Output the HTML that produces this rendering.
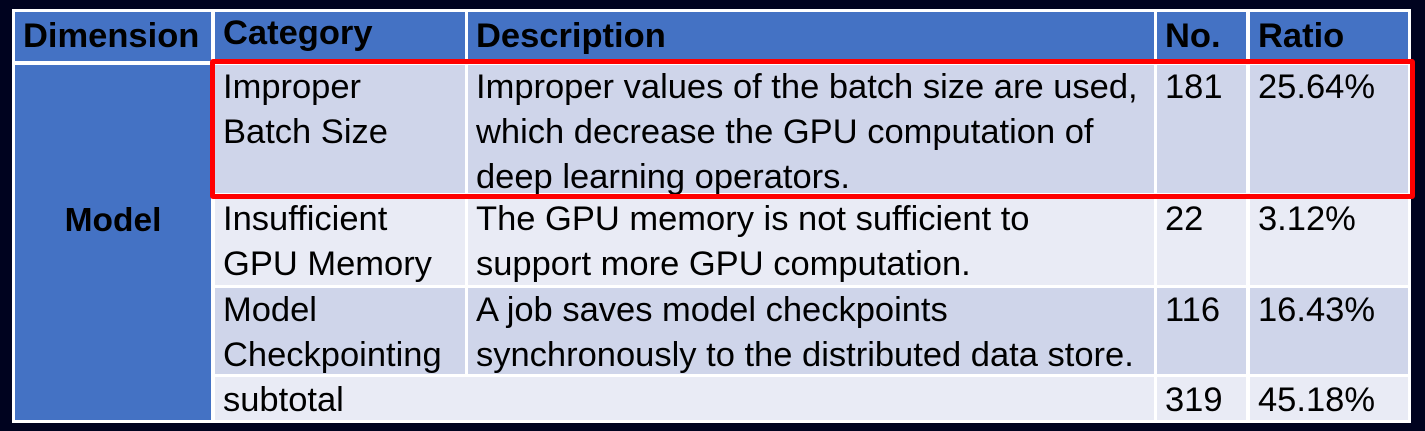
<!DOCTYPE html>
<html><head><style>
body{margin:0;width:1425px;height:431px;background:#00031f;position:relative;overflow:hidden;font-family:"Liberation Sans",Arial,sans-serif;color:#000}
.w{position:absolute;left:12px;top:9px;width:1399px;height:414px;background:#fff}
.c{position:absolute;box-sizing:border-box;padding:0 0 0 8px;font-size:34.5px;line-height:45px;white-space:nowrap}
.h{background:#4472c4;font-weight:bold;font-size:34.5px;line-height:48px}
.a{background:#cfd5ea}.b{background:#e9ebf5}
</style></head><body>
<div class="w"></div>
<div class="c h" style="left:15px;top:12px;width:196px;height:49px;padding-left:8px">Dimension</div>
<div class="c h" style="left:215px;top:12px;width:250px;height:49px;line-height:42px">Category</div>
<div class="c h" style="left:468px;top:12px;width:686px;height:49px">Description</div>
<div class="c h" style="left:1157px;top:12px;width:89px;height:49px">No.</div>
<div class="c h" style="left:1250px;top:12px;width:158px;height:49px">Ratio</div>

<div class="c" style="left:15px;top:65px;width:196px;height:355px;background:#4472c4;font-weight:bold;font-size:33.5px;text-align:center;padding:0;line-height:312px">Model</div>

<div class="c a" style="left:215px;top:65px;width:250px;height:128px">Improper<br>Batch Size</div>
<div class="c a" style="left:468px;top:65px;width:686px;height:128px">Improper values of the batch size are used,<br>which decrease the GPU computation of<br>deep learning operators.</div>
<div class="c a" style="left:1157px;top:65px;width:89px;height:128px">181</div>
<div class="c a" style="left:1250px;top:65px;width:158px;height:128px">25.64%</div>

<div class="c b" style="left:215px;top:197px;width:250px;height:88px">Insufficient<br>GPU Memory</div>
<div class="c b" style="left:468px;top:197px;width:686px;height:88px">The GPU memory is not sufficient to<br>support more GPU computation.</div>
<div class="c b" style="left:1157px;top:197px;width:89px;height:88px">22</div>
<div class="c b" style="left:1250px;top:197px;width:158px;height:88px">3.12%</div>

<div class="c a" style="left:215px;top:288px;width:250px;height:86px">Model<br>Checkpointing</div>
<div class="c a" style="left:468px;top:288px;width:686px;height:86px">A job saves model checkpoints<br>synchronously to the distributed data store.</div>
<div class="c a" style="left:1157px;top:288px;width:89px;height:86px">116</div>
<div class="c a" style="left:1250px;top:288px;width:158px;height:86px">16.43%</div>

<div class="c b" style="left:215px;top:377px;width:939px;height:43px;line-height:46px">subtotal</div>
<div class="c b" style="left:1157px;top:377px;width:89px;height:43px;line-height:46px">319</div>
<div class="c b" style="left:1250px;top:377px;width:158px;height:43px;line-height:46px">45.18%</div>

<div style="position:absolute;left:210px;top:59px;width:1205px;height:140px;box-sizing:border-box;border:5px solid #f00;border-radius:3px"></div>
</body></html>
